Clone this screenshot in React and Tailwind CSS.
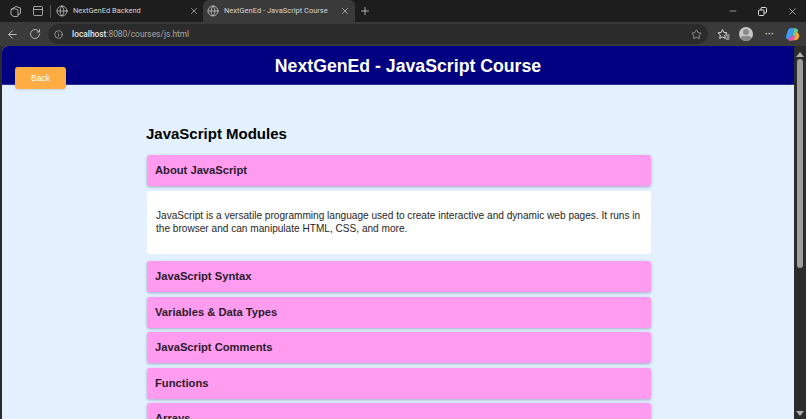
import React from "react";
import { ArrowLeft, Globe, Info, Minus, PanelTop, Plus, RotateCw, Star, X } from "lucide-react";

const modules = [
  "JavaScript Syntax",
  "Variables & Data Types",
  "JavaScript Comments",
  "Functions",
  "Arrays",
];

const Tab = ({ title, active }) => (
  <div
    className={`h-[22px] flex items-center rounded-t-md ${
      active ? "w-[152px] pl-[4px] pr-[5px] bg-[#3a3a3a]" : "w-[150px] pl-[3px] pr-[4px]"
    }`}
  >
    <Globe size={12} strokeWidth={1.4} className="text-[#d8d8d8] shrink-0" />
    <span className="ml-[5px] text-[7.5px] leading-none text-[#d4d4d4] whitespace-nowrap font-['Roboto',sans-serif]">{title}</span>
    <X size={10} strokeWidth={1.5} className="ml-auto text-[#d8d8d8]" />
  </div>
);

const ModuleHeader = ({ title }) => (
  <div className="h-[31px] shrink-0 flex items-center px-[8px] bg-[#ff9cf0] rounded-[3px] shadow-[0_1px_3px_rgba(0,0,80,0.3)]">
    <h3 className="text-[11.2px] font-bold text-[#2b1a2b]">{title}</h3>
  </div>
);

const Workspaces = ({ className }) => (
  <svg width="13" height="13" viewBox="0 0 13 13" fill="none" stroke="currentColor" strokeWidth="0.8" className={className}>
    <path d="M2 4.5 L7 1.5 L11.5 3 V8.5 L9 10" />
    <path d="M2 4.5 V9 Q2 10 3 10.5 L5 11.5 H8 Q9 11.5 9 10.5 V5.5 Q9 4.5 8 4.5 L6.5 4 Q5 3.5 4 4 L2 4.5Z" />
  </svg>
);

const Restore = () => (
  <svg width="9" height="9" viewBox="0 0 9 9" fill="none" stroke="currentColor" strokeWidth="1" className="ml-[20px]">
    <rect x="0.5" y="3" width="5.5" height="5.5" rx="1" />
    <path d="M3 3 V1.5 Q3 0.5 4 0.5 H7.5 Q8.5 0.5 8.5 1.5 V5 Q8.5 6 7.5 6 H6" />
  </svg>
);

const Favorites = () => (
  <svg width="13" height="13" viewBox="0 0 13 13" fill="none" stroke="currentColor" strokeWidth="1" className="ml-[9px] text-[#d8d8d8]">
    <path d="M5.5 1.5 L6.9 4.5 L10 4.8 L7.7 7 L8.3 10.5 L5.5 8.8 L2.7 10.5 L3.3 7 L1 4.8 L4.1 4.5Z" />
    <path d="M9 7 H12.5 M9.5 9 H12.5 M9 11 H12.5" />
  </svg>
);

const Copilot = () => (
  <svg width="15" height="15" viewBox="0 0 16 16">
    <path d="M6 1 L10 1 L8 9 L3 13 Q1 13 1 10 L3 4 Q4 1 6 1Z" fill="#3f9bf0" />
    <path d="M10 1 Q13 1 14 4 L11 10 L8 9Z" fill="#5fd08a" />
    <path d="M12 5 Q16 7 15 11 Q14 14 11 14 L6 14 L11 9Z" fill="#f2a63c" />
    <path d="M3 13 L8 9 L11 10 L9 14 L5 15Z" fill="#e25bb0" />
  </svg>
);

export default function App() {
  return (
    <div className="h-[419px] w-[806px] overflow-hidden bg-[#2b2b2b] flex flex-col font-['Liberation_Sans',sans-serif]">
      {/* tab strip */}
      <div className="h-[22px] shrink-0 bg-[#1d1d1d] flex items-center">
        <Workspaces className="ml-[9px] text-[#cfcfcf]" />
        <PanelTop size={12} strokeWidth={1.5} className="ml-[10px] text-[#cfcfcf]" />
        <div className="ml-[6px] mr-[2px] w-px h-[13px] bg-[#555]" />
        <Tab title="NextGenEd Backend" />
        <Tab title="NextGenEd - JavaScript Course" active />
        <Plus size={12} strokeWidth={1.5} className="ml-[4px] text-[#d8d8d8]" />
        <div className="ml-auto flex items-center text-[#e0e0e0]">
          <Minus size={10} strokeWidth={1.5} />
          <Restore />
          <X size={11} strokeWidth={1.5} className="ml-[20px] mr-[8px]" />
        </div>
      </div>

      {/* address bar */}
      <div className="h-[24px] shrink-0 bg-[#3a3a3a] flex items-center">
        <ArrowLeft size={13} strokeWidth={1.5} className="ml-[6px] text-[#d8d8d8]" />
        <RotateCw size={12} strokeWidth={1.5} className="ml-[10px] text-[#d8d8d8]" />
        <div className="ml-[7px] w-[660px] h-[20px] rounded-full bg-[#2b2b2b] flex items-center">
          <Info size={9} strokeWidth={1.5} className="ml-[6px] text-[#d8d8d8]" />
          <span className="ml-[9px] text-[8.4px] text-[#a8a8a8] font-['Roboto',sans-serif]">
            <span className="text-[#e8e8e8] font-medium">localhost</span>:8080/courses/js.html
          </span>
          <Star size={11} strokeWidth={1.5} className="ml-auto mr-[6px] text-[#b8b8b8]" />
        </div>
        <Favorites />
        <div className="relative ml-[9px] w-[14px] h-[14px] rounded-full bg-[#c8c8c8] overflow-hidden">
          <div className="absolute left-[4px] top-[2px] w-[6px] h-[6px] rounded-full bg-[#8a8a8a]" />
          <div className="absolute left-[1px] top-[9px] w-[12px] h-[8px] rounded-full bg-[#8a8a8a]" />
        </div>
        <span className="ml-[12px] w-[9px] text-[9px] leading-none font-bold text-[#d8d8d8]">···</span>
        <div className="ml-[11px]">
          <Copilot />
        </div>
      </div>

      {/* viewport */}
      <div className="flex-1 flex pl-[2px] bg-[#2b2b2b] min-h-0">
        <div className="w-[792px] rounded-tl-md overflow-hidden bg-[#e2f1fd] flex flex-col">
          <header className="relative h-[39px] shrink-0 bg-[#000080] border-b border-[#2e2e9a] flex justify-center pl-[20px]">
            <h1 className="mt-[8px] text-[17.7px] leading-[24px] font-bold text-white">NextGenEd - JavaScript Course</h1>
          </header>
          <button className="relative z-10 -mt-[18px] ml-[13px] w-[51px] h-[22px] shrink-0 bg-[#ffad42] rounded-[3px] text-[8.5px] text-white shadow-sm">
            Back
          </button>

          <main className="w-[504px] ml-[145px] flex flex-col">
            <h2 className="-ml-px mt-[35px] text-[15px] leading-[20px] font-bold text-black">JavaScript Modules</h2>
            <div className="mt-[11px] flex flex-col">
              <ModuleHeader title="About JavaScript" />
              <div className="mt-[5px] h-[63px] bg-white rounded-[3px] pt-[19px] px-[9px] text-[10.1px] leading-[12.5px] text-[#262626]">
                JavaScript is a versatile programming language used to create interactive and dynamic web pages. It runs in the browser and can manipulate HTML, CSS, and more.
              </div>
              <div className="mt-[7px] flex flex-col gap-[4.6px]">
                {modules.map((m) => (
                  <ModuleHeader key={m} title={m} />
                ))}
              </div>
            </div>
          </main>
        </div>

        {/* scrollbar */}
        <div className="w-[12px] bg-[#2b2b2b] flex flex-col items-center pt-[6px]">
          <div className="w-0 h-0 border-x-[4px] border-x-transparent border-b-[5px] border-b-[#b0b0b0]" />
          <div className="mt-[2px] w-[6px] h-[209px] rounded-full bg-[#9e9e9e]" />
          <div className="mt-auto mb-[3px] w-0 h-0 border-x-[4px] border-x-transparent border-t-[5px] border-t-[#b0b0b0]" />
        </div>
      </div>
    </div>
  );
}
